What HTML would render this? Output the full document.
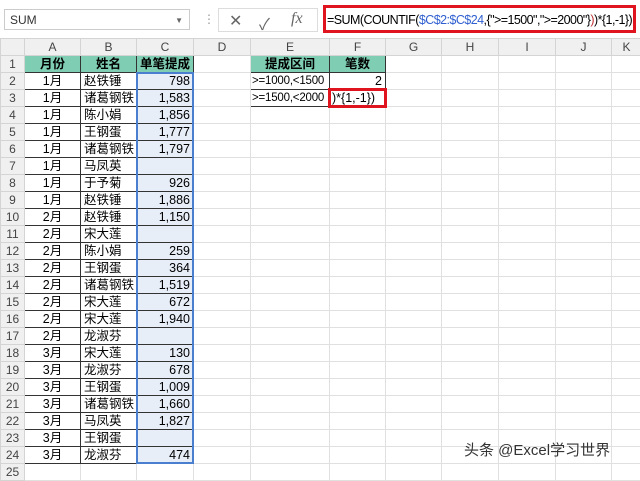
<!DOCTYPE html><html><head><style>
body{margin:0;width:640px;height:471px;overflow:hidden;background:#fff;font-family:"Liberation Sans","Noto Sans CJK SC",sans-serif;position:relative}
.a{position:absolute;box-sizing:border-box}
table{position:absolute;left:0;top:38px;border-collapse:collapse;table-layout:fixed;width:641px}
tr{height:17px}
td{height:17px;line-height:14px;padding:0 3px;border:1px solid #e0e0e0;font-size:12.5px;white-space:nowrap;overflow:hidden;box-sizing:border-box}
td.h{background:#f0f0f0;color:#444;text-align:center;border-color:#d4d4d4;font-size:12px;padding:0}
.g{background:#7fcdb2;font-weight:bold;text-align:center;border:1px solid #333}
.b{border:1px solid #333}
.c{text-align:center}.r{text-align:right}
.s{background:#e8eef8}
.e{padding:0 1px;font-size:11.5px;letter-spacing:-0.2px}
</style></head><body>
<div class="a" style="left:4px;top:9px;width:186px;height:21px;border:1px solid #ccc;font-size:12px;padding:3px 5px;color:#333">SUM<span style="position:absolute;right:6px;font-size:8px;top:6px;color:#666">▼</span></div>
<div class="a" style="left:203px;top:12px;color:#999;font-size:12px">⋮</div>
<div class="a" style="left:218px;top:8px;width:100px;height:24px;border:1px solid #ddd;font-size:16px;color:#666"><span style="position:absolute;left:10px;top:2px">✕</span><span style="position:absolute;left:40px;top:2px">✓</span><span style="position:absolute;left:72px;top:1px;font-family:'Liberation Serif';font-style:italic">fx</span></div>
<div class="a" style="left:323px;top:5px;width:313px;height:28px;border:3px solid #e0141e;font-size:12.5px;padding:5px 1px;white-space:nowrap;letter-spacing:-0.55px;overflow:hidden">=SUM(COUNTIF(<span style="color:#3060d0">$C$2:$C$24</span>,{"&gt;=1500","&gt;=2000"}<span style="color:#c03030">)</span>)*{1,-1})|</div>
<table>
<colgroup><col style="width:24px"><col style="width:56px"><col style="width:56px"><col style="width:57px"><col style="width:57px"><col style="width:79px"><col style="width:56px"><col style="width:56px"><col style="width:57px"><col style="width:57px"><col style="width:56px"><col style="width:30px"></colgroup>
<tr><td class="h"></td><td class="h">A</td><td class="h">B</td><td class="h">C</td><td class="h">D</td><td class="h">E</td><td class="h">F</td><td class="h">G</td><td class="h">H</td><td class="h">I</td><td class="h">J</td><td class="h">K</td></tr>
<tr><td class="h">1</td><td class="g">月份</td><td class="g">姓名</td><td class="g">单笔提成</td><td></td><td class="g">提成区间</td><td class="g">笔数</td><td></td><td></td><td></td><td></td><td></td></tr>
<tr><td class="h">2</td><td class="b c">1月</td><td class="b">赵铁锤</td><td class="b r s">798</td><td></td><td class="b e">&gt;=1000,&lt;1500</td><td class="b r">2</td><td></td><td></td><td></td><td></td><td></td></tr>
<tr><td class="h">3</td><td class="b c">1月</td><td class="b">诸葛钢铁</td><td class="b r s">1,583</td><td></td><td class="b e">&gt;=1500,&lt;2000</td><td style="border:3px solid #e0141e;padding:0 1px">)*{1,-1})</td><td></td><td></td><td></td><td></td><td></td></tr>
<tr><td class="h">4</td><td class="b c">1月</td><td class="b">陈小娟</td><td class="b r s">1,856</td><td></td><td></td><td></td><td></td><td></td><td></td><td></td><td></td></tr>
<tr><td class="h">5</td><td class="b c">1月</td><td class="b">王钢蛋</td><td class="b r s">1,777</td><td></td><td></td><td></td><td></td><td></td><td></td><td></td><td></td></tr>
<tr><td class="h">6</td><td class="b c">1月</td><td class="b">诸葛钢铁</td><td class="b r s">1,797</td><td></td><td></td><td></td><td></td><td></td><td></td><td></td><td></td></tr>
<tr><td class="h">7</td><td class="b c">1月</td><td class="b">马凤英</td><td class="b r s"></td><td></td><td></td><td></td><td></td><td></td><td></td><td></td><td></td></tr>
<tr><td class="h">8</td><td class="b c">1月</td><td class="b">于予菊</td><td class="b r s">926</td><td></td><td></td><td></td><td></td><td></td><td></td><td></td><td></td></tr>
<tr><td class="h">9</td><td class="b c">1月</td><td class="b">赵铁锤</td><td class="b r s">1,886</td><td></td><td></td><td></td><td></td><td></td><td></td><td></td><td></td></tr>
<tr><td class="h">10</td><td class="b c">2月</td><td class="b">赵铁锤</td><td class="b r s">1,150</td><td></td><td></td><td></td><td></td><td></td><td></td><td></td><td></td></tr>
<tr><td class="h">11</td><td class="b c">2月</td><td class="b">宋大莲</td><td class="b r s"></td><td></td><td></td><td></td><td></td><td></td><td></td><td></td><td></td></tr>
<tr><td class="h">12</td><td class="b c">2月</td><td class="b">陈小娟</td><td class="b r s">259</td><td></td><td></td><td></td><td></td><td></td><td></td><td></td><td></td></tr>
<tr><td class="h">13</td><td class="b c">2月</td><td class="b">王钢蛋</td><td class="b r s">364</td><td></td><td></td><td></td><td></td><td></td><td></td><td></td><td></td></tr>
<tr><td class="h">14</td><td class="b c">2月</td><td class="b">诸葛钢铁</td><td class="b r s">1,519</td><td></td><td></td><td></td><td></td><td></td><td></td><td></td><td></td></tr>
<tr><td class="h">15</td><td class="b c">2月</td><td class="b">宋大莲</td><td class="b r s">672</td><td></td><td></td><td></td><td></td><td></td><td></td><td></td><td></td></tr>
<tr><td class="h">16</td><td class="b c">2月</td><td class="b">宋大莲</td><td class="b r s">1,940</td><td></td><td></td><td></td><td></td><td></td><td></td><td></td><td></td></tr>
<tr><td class="h">17</td><td class="b c">2月</td><td class="b">龙淑芬</td><td class="b r s"></td><td></td><td></td><td></td><td></td><td></td><td></td><td></td><td></td></tr>
<tr><td class="h">18</td><td class="b c">3月</td><td class="b">宋大莲</td><td class="b r s">130</td><td></td><td></td><td></td><td></td><td></td><td></td><td></td><td></td></tr>
<tr><td class="h">19</td><td class="b c">3月</td><td class="b">龙淑芬</td><td class="b r s">678</td><td></td><td></td><td></td><td></td><td></td><td></td><td></td><td></td></tr>
<tr><td class="h">20</td><td class="b c">3月</td><td class="b">王钢蛋</td><td class="b r s">1,009</td><td></td><td></td><td></td><td></td><td></td><td></td><td></td><td></td></tr>
<tr><td class="h">21</td><td class="b c">3月</td><td class="b">诸葛钢铁</td><td class="b r s">1,660</td><td></td><td></td><td></td><td></td><td></td><td></td><td></td><td></td></tr>
<tr><td class="h">22</td><td class="b c">3月</td><td class="b">马凤英</td><td class="b r s">1,827</td><td></td><td></td><td></td><td></td><td></td><td></td><td></td><td></td></tr>
<tr><td class="h">23</td><td class="b c">3月</td><td class="b">王钢蛋</td><td class="b r s"></td><td></td><td></td><td></td><td></td><td></td><td></td><td></td><td></td></tr>
<tr><td class="h">24</td><td class="b c">3月</td><td class="b">龙淑芬</td><td class="b r s">474</td><td></td><td></td><td></td><td></td><td></td><td></td><td></td><td></td></tr>
<tr><td class="h">25</td><td></td><td></td><td></td><td></td><td></td><td></td><td></td><td></td><td></td><td></td><td></td></tr>
</table>
<div class="a" style="left:136px;top:72px;width:58px;height:392px;border:2px solid #4a7fd0"></div>
<div class="a" style="left:464px;top:439px;font-size:15px;color:#333">头条 @Excel学习世界</div>
</body></html>
